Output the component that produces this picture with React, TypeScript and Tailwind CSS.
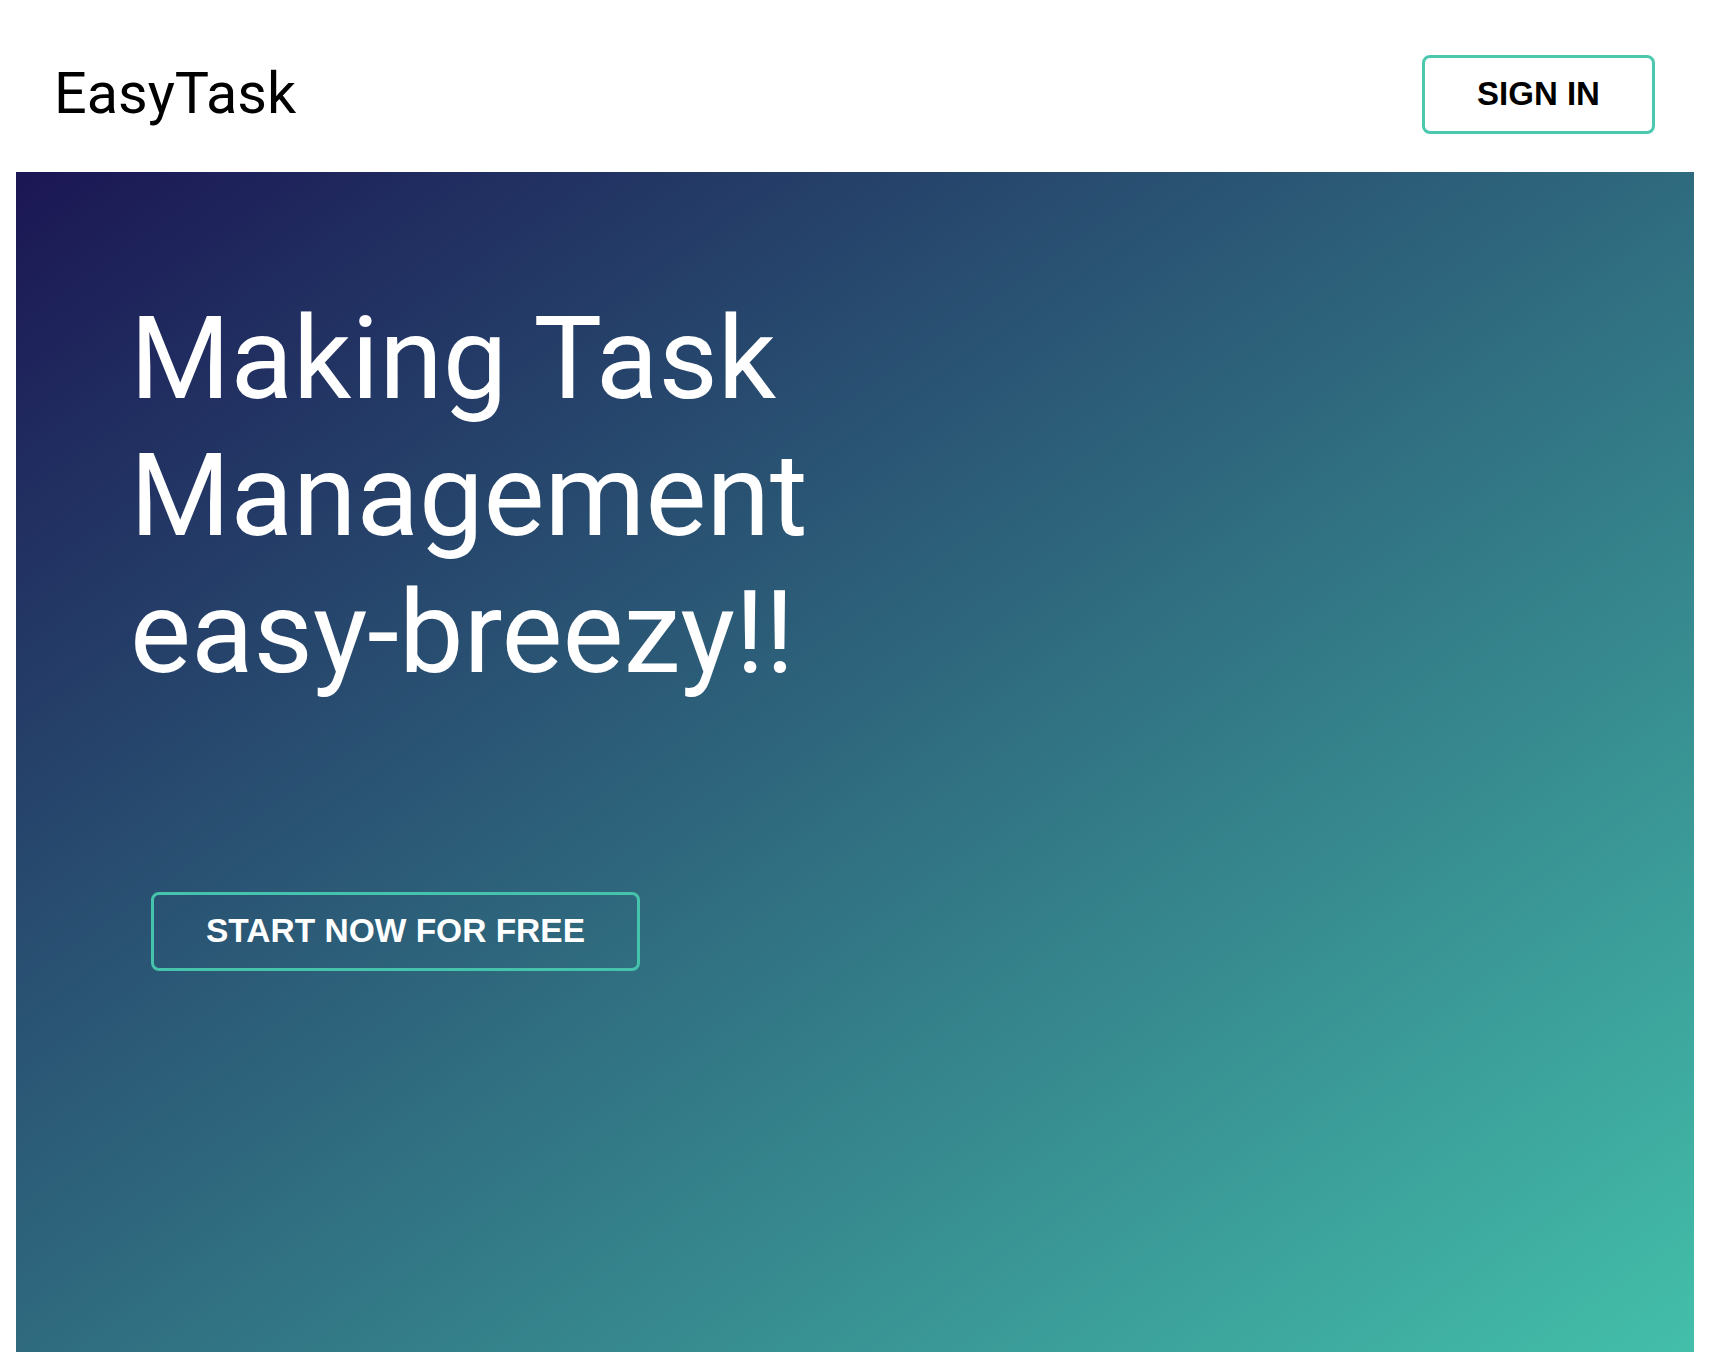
export default function App() {
  return (
    <div className="min-h-screen bg-white font-['Roboto',sans-serif]">
      {/* header */}
      <header className="flex h-[172px] items-center justify-between pt-4 pl-[54px] pr-[55px]">
        <h1 className="text-[57.5px] font-normal leading-none text-black">EasyTask</h1>
        <button className="flex h-[79px] w-[233px] items-center justify-center rounded-lg border-[3px] border-[#4cc8af] bg-white font-['Liberation_Sans',Arial,sans-serif] text-[33px] font-bold text-black">
          SIGN IN
        </button>
      </header>

      {/* hero */}
      <section className="mx-4 h-[1180px] bg-[linear-gradient(to_bottom_right,#1b1654,#43bfaa)] pt-[118px] pl-[114px]">
        <h2 className="text-[115px] font-normal leading-[137px] text-white">
          Making Task
          <br />
          Management
          <br />
          easy-breezy!!
        </h2>
        <button className="mt-[191px] ml-[21px] flex h-[79px] w-[489px] items-center justify-center rounded-lg border-[3px] border-[#45c4ab] font-['Liberation_Sans',Arial,sans-serif] text-[33.5px] font-bold text-white">
          START NOW FOR FREE
        </button>
      </section>
    </div>
  );
}
